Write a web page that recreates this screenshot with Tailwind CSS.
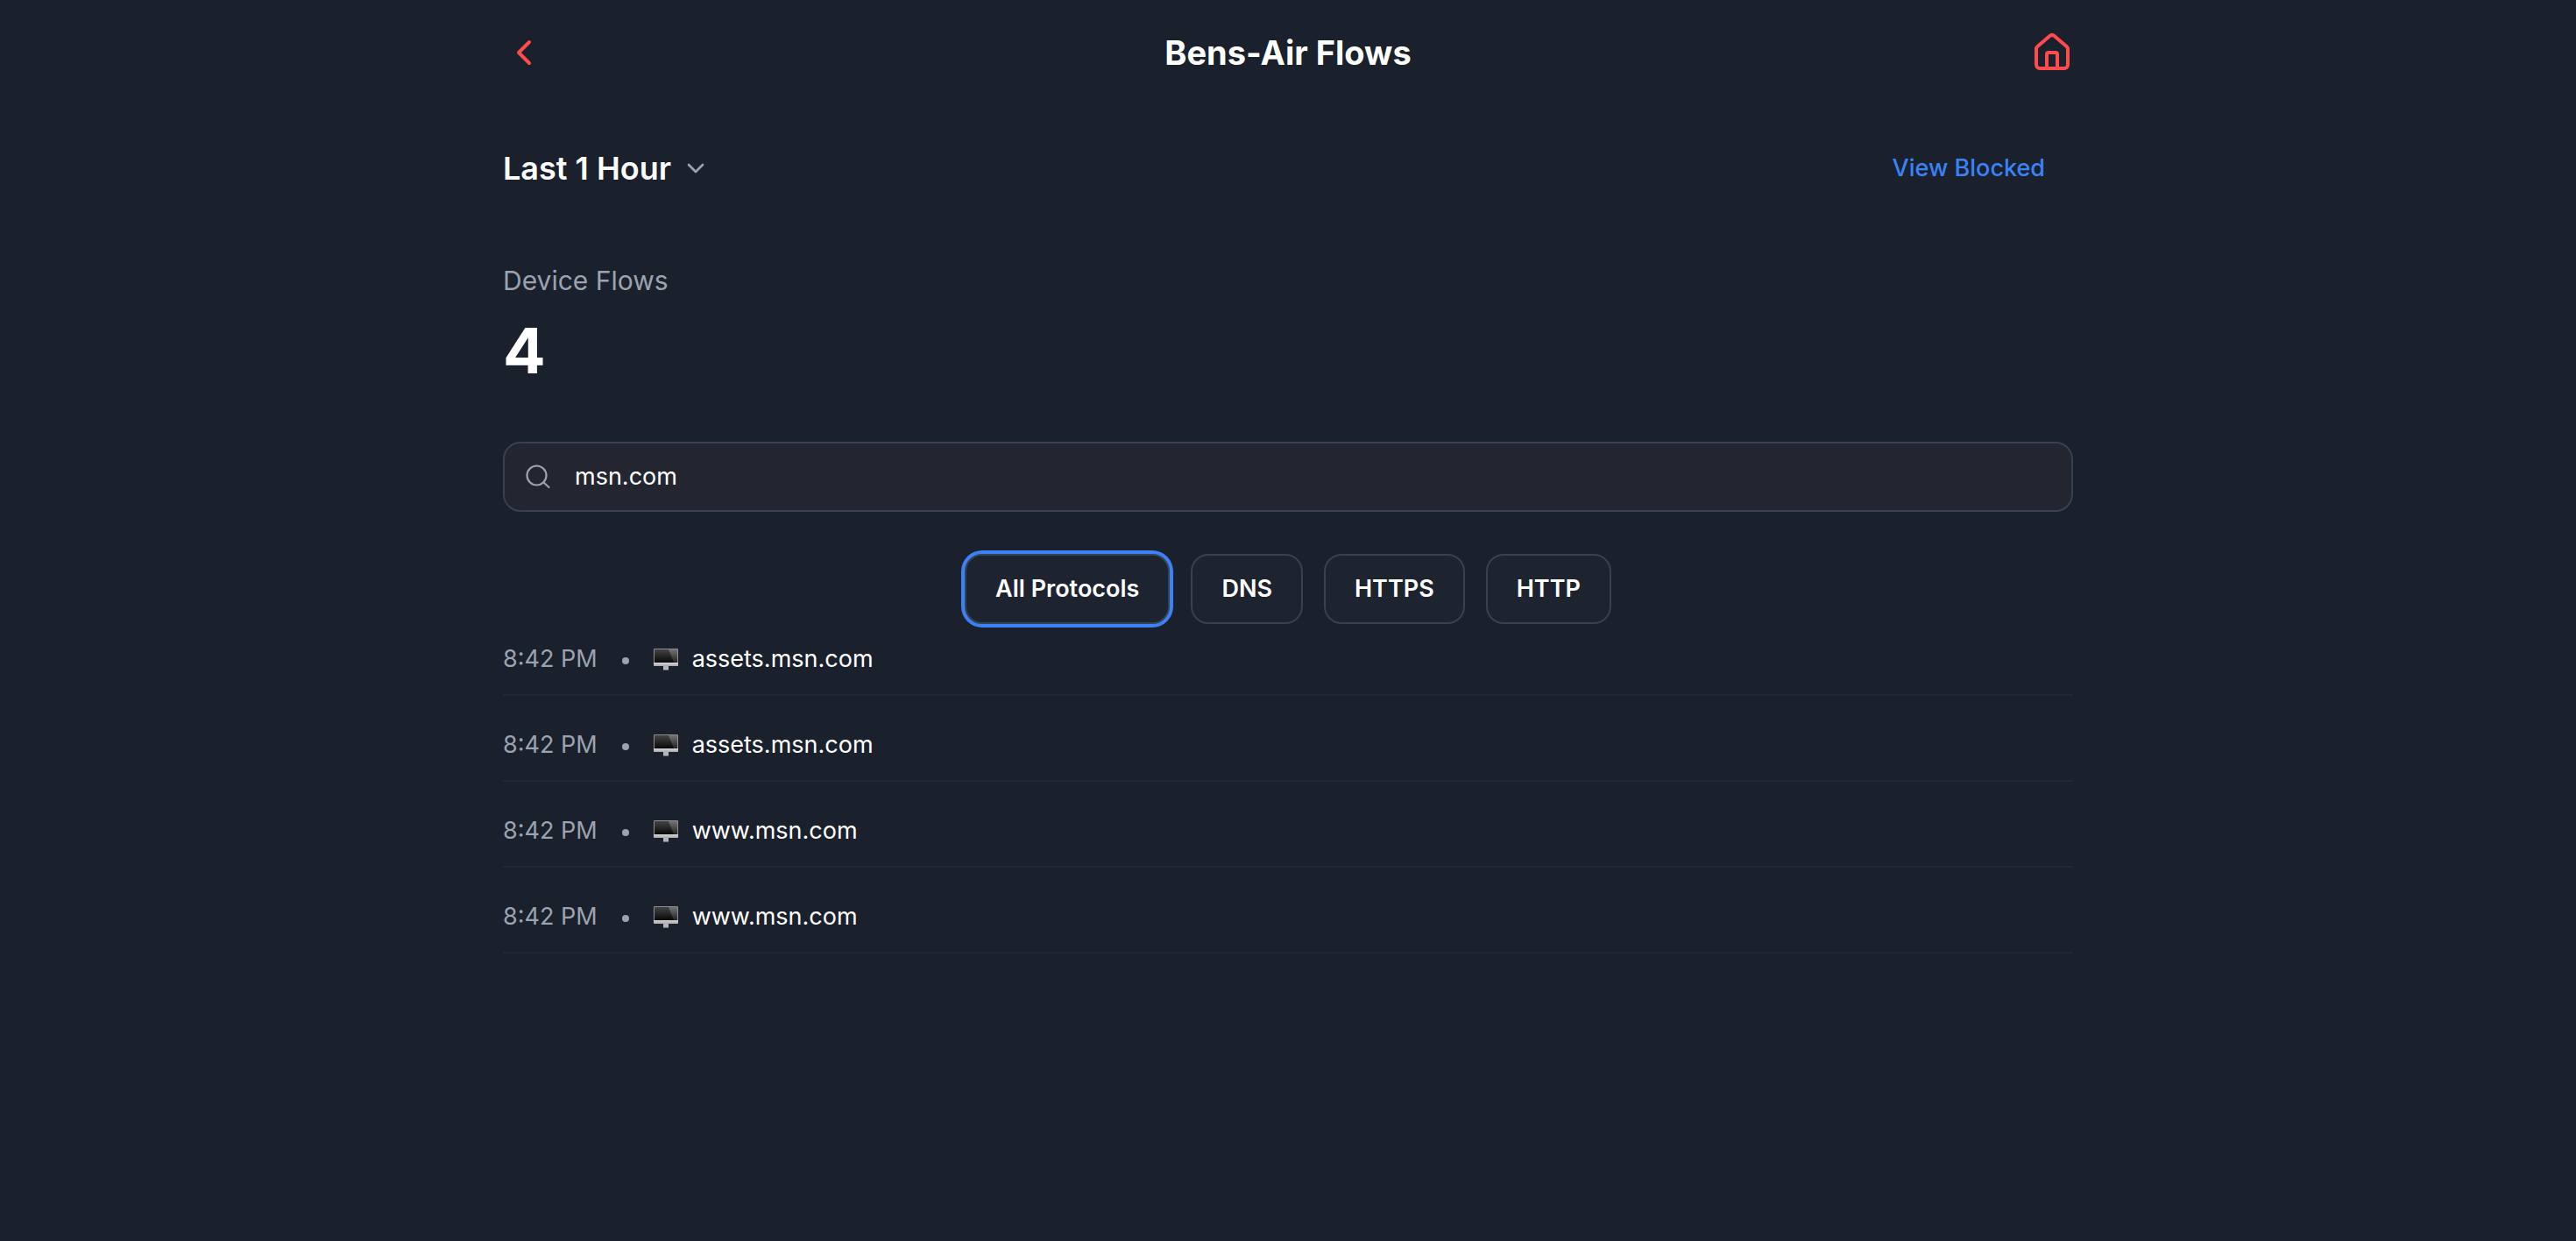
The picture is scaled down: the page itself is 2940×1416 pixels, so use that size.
<!DOCTYPE html>
<html lang="en">
<head>
<meta charset="utf-8">
<title>Bens-Air Flows</title>
<script src="https://cdn.jsdelivr.net/npm/@tailwindcss/browser@4"></script>
</head>
<body class="min-h-screen bg-[#1a202c] font-['Inter',sans-serif] text-[27px] leading-10 text-white">
<svg class="absolute size-0" aria-hidden="true">
  <defs>
    <linearGradient id="screen" x1="0" y1="0" x2="0" y2="1"><stop offset="0" stop-color="#444"/><stop offset="1" stop-color="#080808"/></linearGradient>
    <linearGradient id="glare" x1="0" y1="0" x2="0" y2="1"><stop offset="0" stop-color="#737373"/><stop offset="1" stop-color="#222"/></linearGradient>
    <linearGradient id="chin" x1="0" y1="0" x2="0" y2="1"><stop offset="0" stop-color="#d6d6d8"/><stop offset="1" stop-color="#a9aaad"/></linearGradient>
  </defs>
  <symbol id="monitor" viewBox="0 0 28 25">
    <rect width="28" height="20" rx="1" fill="#8b8b90"/>
    <rect x="1" y="1" width="26" height="15" fill="url(#screen)"/>
    <path d="M17 1h10v15h-4z" fill="url(#glare)"/>
    <path d="M0 16h28v3a1 1 0 0 1-1 1H1a1 1 0 0 1-1-1z" fill="url(#chin)"/>
    <path d="M11 20h6v4.500h-6z" fill="#b4b5b8"/>
  </symbol>
</svg>
<div class="mx-auto max-w-[1792px]">
  <header class="flex h-30 items-center justify-between">
    <button type="button" aria-label="Back" class="text-[#ff4b4b]">
      <svg class="size-12" viewBox="0 0 24 24" fill="none" stroke="currentColor" stroke-width="2" stroke-linecap="round" stroke-linejoin="round"><path d="m15 18-6-6 6-6"/></svg>
    </button>
    <h1 class="text-[38px] leading-12 font-bold">Bens-Air Flows</h1>
    <a href="#" aria-label="Home" class="text-[#ff4b4b]">
      <svg class="size-12" viewBox="0 0 24 24" fill="none" stroke="currentColor" stroke-width="2" stroke-linecap="round" stroke-linejoin="round"><path d="M15 21v-8a1 1 0 0 0-1-1h-4a1 1 0 0 0-1 1v8"/><path d="M3 10a2 2 0 0 1 .709-1.528l7-5.999a2 2 0 0 1 2.582 0l7 5.999A2 2 0 0 1 21 10v9a2 2 0 0 1-2 2H5a2 2 0 0 1-2-2z"/></svg>
    </a>
  </header>
  <main>
    <div class="mt-10 flex h-16 items-center justify-between">
      <div class="flex items-center gap-3">
        <select aria-label="Time range" class="appearance-none bg-transparent text-4xl font-semibold">
          <option>Last 1 Hour</option>
        </select>
        <svg class="pointer-events-none size-8 text-[#9ca3af]" viewBox="0 0 24 24" fill="none" stroke="currentColor" stroke-width="2" stroke-linecap="round" stroke-linejoin="round"><path d="m6 9 6 6 6-6"/></svg>
      </div>
      <button type="button" class="px-8 font-medium text-[#3b82f6]">View Blocked</button>
    </div>
    <section class="mt-18">
      <h2 class="text-3xl leading-12 text-[#9ca3af]">Device Flows</h2>
      <p class="mt-4 text-7xl leading-20 font-bold">4</p>
    </section>
    <label class="mt-16 flex h-20 items-center gap-6 rounded-[20px] border-2 border-[#374151] bg-[#232631] px-6">
      <svg class="size-8 shrink-0 text-[#9ca3af]" viewBox="0 0 32 32" fill="none" stroke="currentColor" stroke-width="2.200" stroke-linecap="round"><circle cx="12.500" cy="14.500" r="11"/><path d="m20.500 22.500 6 5.500"/></svg>
      <input type="text" aria-label="Search flows" value="msn.com" class="w-full bg-transparent outline-none">
    </label>
    <div class="mt-12 flex justify-center gap-6 font-semibold">
      <button type="button" class="h-20 rounded-[20px] border-2 border-[#374151] bg-[#1e2330] px-[33px] ring-4 ring-[#3b82f6]">All Protocols</button>
      <button type="button" class="h-20 rounded-[20px] border-2 border-[#374151] bg-[#1e2330] px-[33px]">DNS</button>
      <button type="button" class="h-20 rounded-[20px] border-2 border-[#374151] bg-[#1e2330] px-[33px]">HTTPS</button>
      <button type="button" class="h-20 rounded-[20px] border-2 border-[#374151] bg-[#1e2330] px-[33px]">HTTP</button>
    </div>
    <ul class="flex flex-col gap-4">
      <li class="flex items-center border-b-2 border-[#1f2937] py-5"><time class="text-[#9ca3af]">8:42 PM</time><span class="mx-7 mt-1 size-2 rounded-full bg-[#9ca3af]"></span><svg class="mr-4 h-[25px] w-7" aria-hidden="true"><use href="#monitor"/></svg><span>assets.msn.com</span></li>
      <li class="flex items-center border-b-2 border-[#1f2937] py-5"><time class="text-[#9ca3af]">8:42 PM</time><span class="mx-7 mt-1 size-2 rounded-full bg-[#9ca3af]"></span><svg class="mr-4 h-[25px] w-7" aria-hidden="true"><use href="#monitor"/></svg><span>assets.msn.com</span></li>
      <li class="flex items-center border-b-2 border-[#1f2937] py-5"><time class="text-[#9ca3af]">8:42 PM</time><span class="mx-7 mt-1 size-2 rounded-full bg-[#9ca3af]"></span><svg class="mr-4 h-[25px] w-7" aria-hidden="true"><use href="#monitor"/></svg><span>www.msn.com</span></li>
      <li class="flex items-center border-b-2 border-[#1f2937] py-5"><time class="text-[#9ca3af]">8:42 PM</time><span class="mx-7 mt-1 size-2 rounded-full bg-[#9ca3af]"></span><svg class="mr-4 h-[25px] w-7" aria-hidden="true"><use href="#monitor"/></svg><span>www.msn.com</span></li>
    </ul>
  </main>
</div>
</body>
</html>
